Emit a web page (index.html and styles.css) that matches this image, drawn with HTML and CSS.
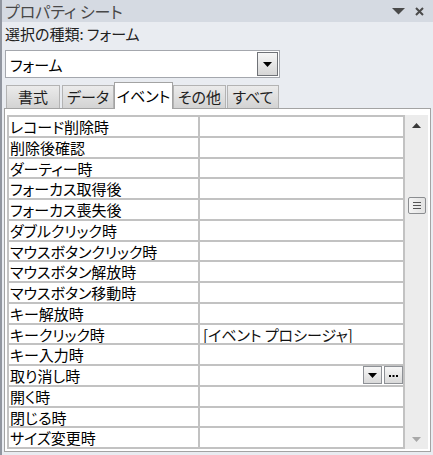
FILE: index.html
```html
<!DOCTYPE html>
<html lang="ja">
<head>
<meta charset="utf-8">
<title>プロパティ シート</title>
<link rel="stylesheet" href="styles.css">
</head>
<body>
<div class="win">
  <div class="titlebar">
    <span class="title">プロパティ シート</span>
    <span class="ctrls">
      <svg class="ico-menu" width="13" height="7" viewBox="0 0 13 7"><path d="M0 0H13L6.5 6.5Z" fill="#4a4a4a"/></svg>
      <svg class="ico-close" width="9" height="9" viewBox="0 0 9 9"><path d="M1 1L8 8M8 1L1 8" stroke="#4a4a4a" stroke-width="2"/></svg>
    </span>
  </div>
  <div class="seltype">選択の種類: フォーム</div>
  <div class="combo">
    <span class="combo-text">フォーム</span>
    <span class="combo-btn"><svg width="9" height="5" viewBox="0 0 9 5"><path d="M0 0H9L4.5 5Z" fill="#000"/></svg></span>
  </div>
  <div class="tabs">
    <div class="tab t1">書式</div>
    <div class="tab t2">データ</div>
    <div class="tab active t3">イベント</div>
    <div class="tab t4">その他</div>
    <div class="tab t5">すべて</div>
  </div>
  <div class="panel">
    <div class="sheet">
      <div class="grid">
        <div class="lbl">レコード削除時</div><div class="val"></div>
        <div class="lbl">削除後確認</div><div class="val"></div>
        <div class="lbl">ダーティー時</div><div class="val"></div>
        <div class="lbl">フォーカス取得後</div><div class="val"></div>
        <div class="lbl">フォーカス喪失後</div><div class="val"></div>
        <div class="lbl">ダブルクリック時</div><div class="val"></div>
        <div class="lbl">マウスボタンクリック時</div><div class="val"></div>
        <div class="lbl">マウスボタン解放時</div><div class="val"></div>
        <div class="lbl">マウスボタン移動時</div><div class="val"></div>
        <div class="lbl">キー解放時</div><div class="val"></div>
        <div class="lbl">キークリック時</div><div class="val">[イベント プロシージャ]</div>
        <div class="lbl">キー入力時</div><div class="val"></div>
        <div class="lbl">取り消し時</div>
        <div class="val val-edit">
          <span class="cbtn"><svg width="9" height="5" viewBox="0 0 9 5"><path d="M0 0H9L4.5 5Z" fill="#000"/></svg></span>
          <span class="cbtn dots"><svg width="9" height="3" viewBox="0 0 9 3"><rect x="0" y="0" width="2" height="2" fill="#000"/><rect x="3.5" y="0" width="2" height="2" fill="#000"/><rect x="7" y="0" width="2" height="2" fill="#000"/></svg></span>
        </div>
        <div class="lbl">開く時</div><div class="val"></div>
        <div class="lbl">閉じる時</div><div class="val"></div>
        <div class="lbl">サイズ変更時</div><div class="val"></div>
      </div>
      <div class="vscroll">
        <div class="arrow"><svg width="9" height="5" viewBox="0 0 9 5"><path d="M0 5H9L4.5 0Z" fill="#3a3a3a"/></svg></div>
        <div class="thumb"><i></i><i></i><i></i></div>
        <div class="spacer"></div>
        <div class="arrow"><svg width="9" height="5" viewBox="0 0 9 5"><path d="M0 0H9L4.5 5Z" fill="#a8a8a8"/></svg></div>
      </div>
    </div>
  </div>
</div>
</body>
</html>
```

FILE: styles.css
```css
html, body {
  margin: 0;
  padding: 0;
}
body {
  width: 433px;
  height: 455px;
  overflow: hidden;
  background: #e9ecf1;
  font-family: "Noto Sans CJK JP", "Noto Sans", sans-serif;
  font-feature-settings: "palt";
}
.win {
  height: 455px;
  border-left: 2px solid #9196a0;
  box-sizing: border-box;
}
.titlebar {
  height: 22px;
  background: #d5dae2;
  display: flex;
  align-items: center;
  justify-content: space-between;
  padding: 0 9px 0 3px;
}
.title {
  font-size: 16px;
  color: #484848;
  line-height: 22px;
}
.ctrls {
  display: flex;
  align-items: center;
  gap: 10px;
}
.ico-menu { margin-top: 1px; }
.seltype {
  height: 24px;
  line-height: 24px;
  font-size: 15px;
  color: #222;
  padding-left: 3px;
}
.combo {
  margin: 4px 0 0 3px;
  width: 275px;
  height: 28px;
  box-sizing: border-box;
  border: 1px solid #a4a7ad;
  background: #fff;
  display: flex;
  align-items: center;
  justify-content: space-between;
  padding: 1px 1px 1px 4px;
}
.combo-text {
  font-size: 15px;
  color: #000;
}
.combo-btn {
  width: 21px;
  height: 24px;
  box-sizing: border-box;
  border: 1px solid #6f7277;
  background: linear-gradient(#f6f6f6, #d6d6d6);
  display: flex;
  align-items: center;
  justify-content: center;
}
.tabs {
  height: 30px;
  display: flex;
  align-items: flex-end;
  padding-left: 4px;
  position: relative;
  z-index: 1;
}
.tab {
  height: 23px;
  box-sizing: border-box;
  border: 1px solid #b3b3b3;
  border-bottom: none;
  background: linear-gradient(#ebebeb, #d3d3d3);
  font-size: 15px;
  line-height: 22px;
  color: #1e1e1e;
  text-align: center;
}
.tab.active {
  height: 27px;
  margin-bottom: -1px;
  background: #fff;
  border-color: #a3a3a3;
  line-height: 25px;
  color: #000;
}
.t1 { width: 54px; }
.t2 { width: 52px; margin-left: 2px; }
.t3 { width: 59px; }
.t4 { width: 53px; }
.t5 { width: 52px; margin-left: 1px; }
.panel {
  margin-left: 2px;
  width: 427px;
  box-sizing: border-box;
  border: 1px solid #a3a3a3;
  background: #fff;
  padding: 6px 1px 2px 2px;
}
.sheet {
  display: flex;
  height: 334px;
}
.grid {
  display: grid;
  grid-template-columns: 189px 203px;
  grid-template-rows: repeat(16, 1fr);
  gap: 2px;
  padding: 2px;
  background: #c2c2c2;
  width: 398px;
  box-sizing: border-box;
}
.lbl, .val {
  background: #fff;
  font-size: 15px;
  line-height: 19px;
  color: #000;
  white-space: nowrap;
  overflow: hidden;
}
.lbl { padding-left: 1px; }
.val { padding-left: 3px; color: #111; }
.val-edit {
  display: flex;
  justify-content: flex-end;
  align-items: center;
  gap: 2px;
  padding: 0;
  overflow: visible;
}
.cbtn {
  width: 19px;
  height: 18px;
  box-sizing: border-box;
  border: 1px solid #8e9196;
  background: linear-gradient(#f7f7f7, #d9d9d9);
  display: flex;
  align-items: center;
  justify-content: center;
}
.cbtn.dots { align-items: flex-end; padding-bottom: 5px; }
.vscroll {
  width: 23px;
  background: #ececec;
  display: flex;
  flex-direction: column;
  align-items: center;
}
.arrow {
  height: 20px;
  width: 100%;
  display: flex;
  align-items: center;
  justify-content: center;
}
.thumb {
  margin-top: 62px;
  width: 18px;
  height: 17px;
  box-sizing: border-box;
  border: 1px solid #8b8d90;
  border-radius: 2px;
  background: linear-gradient(90deg, #f4f4f4, #e2e2e2);
  display: flex;
  flex-direction: column;
  align-items: center;
  justify-content: center;
  gap: 2px;
}
.thumb i {
  display: block;
  width: 8px;
  height: 1px;
  background: #555;
}
.spacer { flex: 1; }
```
